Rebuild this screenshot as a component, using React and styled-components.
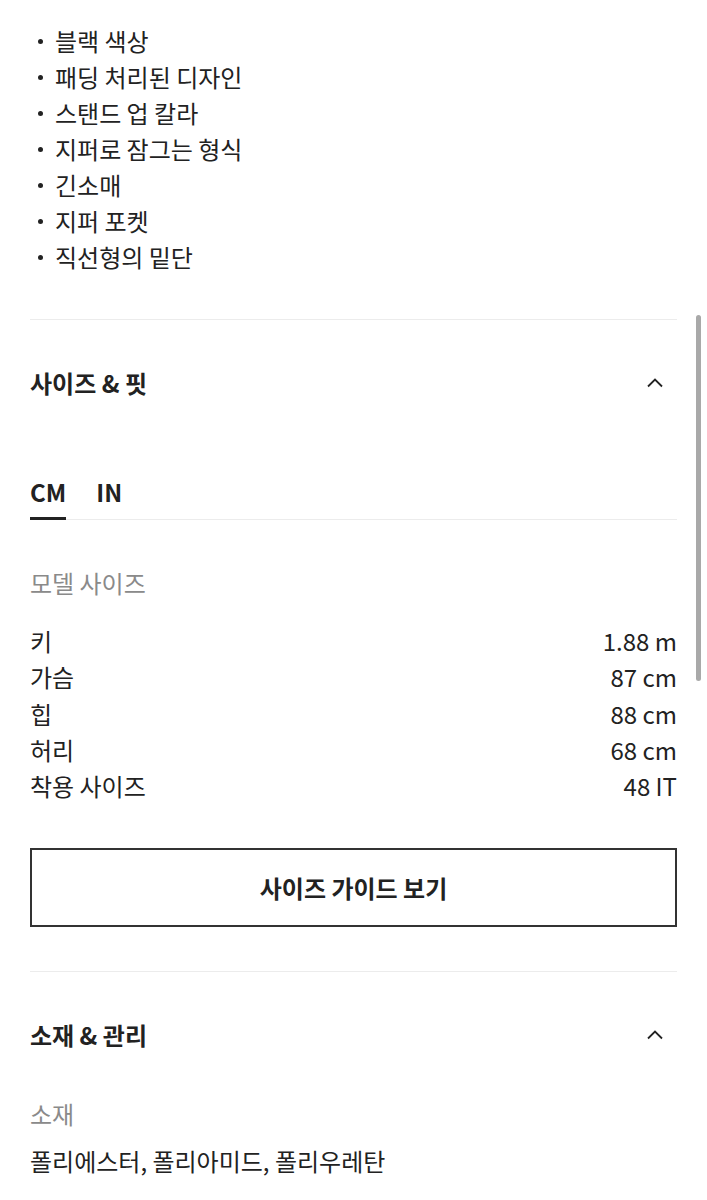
import React, { useState } from 'react';
import styled, { createGlobalStyle } from 'styled-components';

const GlobalStyle = createGlobalStyle`
  html, body {
    margin: 0;
    padding: 0;
    background: #fff;
  }
  body {
    font-family: "Noto Sans CJK KR", "Noto Sans", sans-serif;
    color: #222;
    -webkit-font-smoothing: antialiased;
  }
`

const Page = styled.div`
  padding: 0 30px;
  width: 100%;
  box-sizing: border-box;
`

const BulletList = styled.ul`
  list-style: none;
  margin: 0;
  padding: 23px 0 0 0;
`

const BulletItem = styled.li`
  display: flex;
  align-items: center;
  font-size: 24px;
  line-height: 36px;
  height: 36px;

  &::before {
    content: '';
    width: 5px;
    height: 5px;
    border-radius: 50%;
    background: #222;
    margin: 0 12px 0 8px;
    flex: none;
  }
`

const Divider = styled.hr`
  border: 0;
  border-top: 1px solid #ececec;
  margin: ${props => props.top || 0}px 0 0 0;
`

const SectionHeader = styled.button`
  all: unset;
  box-sizing: border-box;
  display: flex;
  align-items: center;
  justify-content: space-between;
  width: 100%;
  height: 124px;
  cursor: pointer;
`

const SectionTitle = styled.span`
  font-size: 24px;
  font-weight: 700;
  color: #222;
`

const ChevronWrap = styled.span`
  display: flex;
  margin-right: 13px;
`

const TabList = styled.div`
  display: flex;
  gap: 30px;
  padding-top: 30px;
  border-bottom: 1px solid #ececec;
`

const Tab = styled.button`
  all: unset;
  cursor: pointer;
  font-size: 24px;
  font-weight: 700;
  line-height: 36px;
  padding-bottom: 7px;
  margin-bottom: -1px;
  color: #222;
  border-bottom: 3px solid ${props => (props.active ? '#222' : 'transparent')};
`

const SubLabel = styled.div`
  font-size: 24px;
  line-height: 36px;
  color: #8a8a8a;
  margin-top: ${props => props.top || 0}px;
`

const SpecTable = styled.div`
  margin-top: 22px;
  display: flex;
  flex-direction: column;
`

const SpecRow = styled.div`
  display: flex;
  justify-content: space-between;
  font-size: 24px;
  line-height: 36.25px;
  color: #222;
`

const GuideButton = styled.button`
  all: unset;
  box-sizing: border-box;
  display: flex;
  align-items: center;
  justify-content: center;
  width: 100%;
  height: 79px;
  margin-top: 44px;
  border: 2px solid #333;
  font-size: 24px;
  font-weight: 700;
  color: #222;
  cursor: pointer;
`

const BodyText = styled.div`
  font-size: 24px;
  line-height: 36px;
  color: #222;
  margin-top: 11px;
`

const ScrollThumb = styled.div`
  position: fixed;
  top: 315px;
  right: 6px;
  width: 5px;
  height: 366px;
  border-radius: 3px;
  background: #a9a9a9;
`

const Chevron = () => (
  <ChevronWrap>
    <svg width="18" height="11" viewBox="0 0 18 11" fill="none">
      <path d="M2 9.5L9 2.5L16 9.5" stroke="#222" strokeWidth="1.8" />
    </svg>
  </ChevronWrap>
);

const features = [
  '블랙 색상',
  '패딩 처리된 디자인',
  '스탠드 업 칼라',
  '지퍼로 잠그는 형식',
  '긴소매',
  '지퍼 포켓',
  '직선형의 밑단',
];

const specs = [
  ['키', '1.88 m'],
  ['가슴', '87 cm'],
  ['힙', '88 cm'],
  ['허리', '68 cm'],
  ['착용 사이즈', '48 IT'],
];

export default function App() {
  const [unit, setUnit] = useState('CM');

  return (
    <Page>
      <GlobalStyle />
      <BulletList>
        {features.map(f => (
          <BulletItem key={f}>{f}</BulletItem>
        ))}
      </BulletList>

      <Divider top={44} />
      <SectionHeader>
        <SectionTitle>사이즈 &amp; 핏</SectionTitle>
        <Chevron />
      </SectionHeader>

      <TabList>
        <Tab active={unit === 'CM'} onClick={() => setUnit('CM')}>CM</Tab>
        <Tab active={unit === 'IN'} onClick={() => setUnit('IN')}>IN</Tab>
      </TabList>

      <SubLabel top={45}>모델 사이즈</SubLabel>
      <SpecTable>
        {specs.map(([k, v]) => (
          <SpecRow key={k}>
            <span>{k}</span>
            <span>{v}</span>
          </SpecRow>
        ))}
      </SpecTable>

      <GuideButton>사이즈 가이드 보기</GuideButton>

      <Divider top={44} />
      <SectionHeader>
        <SectionTitle>소재 &amp; 관리</SectionTitle>
        <Chevron />
      </SectionHeader>
      <SubLabel>소재</SubLabel>
      <BodyText>폴리에스터, 폴리아미드, 폴리우레탄</BodyText>

      <ScrollThumb />
    </Page>
  );
}
